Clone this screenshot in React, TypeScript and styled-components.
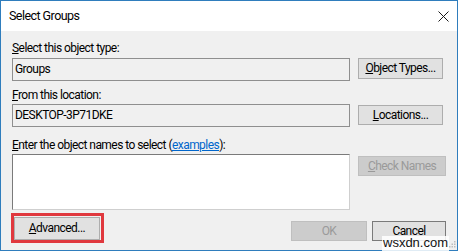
import React from "react";
import styled, { createGlobalStyle } from "styled-components";

const GlobalStyle = createGlobalStyle`
  html, body { margin: 0; padding: 0; background: #ffffff; }
  body { font-family: Roboto, "Liberation Sans", Arial, sans-serif; font-size: 12px; letter-spacing: -0.55px; color: #000; }
  * { box-sizing: border-box; }
`;

const Window = styled.div`
  position: relative;
  width: 458px;
  height: 251px;
  border: 1px solid #2f7dbd;
  background: #f0f0f0;
  display: flex;
  flex-direction: column;
`;

const TitleBar = styled.div`
  height: 30px;
  background: #ffffff;
  display: flex;
  align-items: center;
  justify-content: space-between;
  padding-left: 8px;
`;

const Title = styled.span`
  font-size: 12.5px;
  line-height: 15px;
  padding-bottom: 2px;
`;

const CloseBox = styled.div`
  width: 28px;
  height: 30px;
  display: flex;
  align-items: center;
  justify-content: center;
`;

const Body = styled.div`
  flex: 1;
  display: grid;
  grid-template-columns: 1fr 88px;
  column-gap: 8px;
  align-content: start;
  padding: 10px 11px 0 11px;
`;

const Label = styled.div<{ $mt: number }>`
  grid-column: 1 / -1;
  height: 15px;
  line-height: 15px;
  margin-top: ${(p) => p.$mt}px;
  white-space: nowrap;
`;

const Field = styled.div<{ $mt: number }>`
  height: 23px;
  margin-top: ${(p) => p.$mt}px;
  border: 1px solid #8f8f8f;
  background: #f0f0f0;
  display: flex;
  align-items: center;
  padding-left: 2px;
  line-height: 15px;
`;

const NamesBox = styled.div`
  height: 56px;
  margin-top: 1px;
  background: #ffffff;
  border-top: 1px solid #7a7a7a;
  border-left: 1px solid #7a7a7a;
  border-right: 1px solid #cfcfcf;
  border-bottom: 1px solid #cfcfcf;
`;

const Button = styled.div<{ $w: number; $h: number; $mt?: number; $disabled?: boolean; $dark?: boolean }>`
  width: ${(p) => p.$w}px;
  height: ${(p) => p.$h}px;
  margin-top: ${(p) => p.$mt ?? 0}px;
  align-self: ${(p) => (p.$mt === undefined ? "center" : "start")};
  border: 1px solid ${(p) => (p.$disabled ? "#bfbfbf" : p.$dark ? "#7a7a7a" : "#adadad")};
  background: ${(p) => (p.$disabled ? "#cccccc" : "#e1e1e1")};
  color: ${(p) => (p.$disabled ? "#9a9a9a" : "#000")};
  display: flex;
  align-items: center;
  justify-content: center;
  line-height: 15px;
  white-space: nowrap;
  flex-shrink: 0;
`;

const Link = styled.span`
  color: #0066cc;
  text-decoration: underline;
`;

const BottomRow = styled.div`
  grid-column: 1 / -1;
  display: flex;
  align-items: flex-start;
  margin-top: 3px;
  gap: 5px;
`;

const RedFrame = styled.div`
  margin-left: -1px;
  border: 3px solid #e0383e;
  padding: 1px 1px 0 0;
`;

const Spacer = styled.div`
  flex: 1;
`;

const Watermark = styled.div`
  position: absolute;
  left: 381px;
  top: 235px;
  font-family: "Liberation Sans", Arial, sans-serif;
  font-size: 13px;
  letter-spacing: 0;
  line-height: 13px;
  padding: 0 1px 2px 1px;
  background: rgba(255, 255, 255, 0.85);
  color: #111;
`;

const Grip = styled.svg`
  position: absolute;
  right: 1px;
  bottom: 2px;
`;

export default function App() {
  return (
    <>
      <GlobalStyle />
      <Window>
        <TitleBar>
          <Title>Select Groups</Title>
          <CloseBox>
            <svg width="11" height="11" viewBox="0 0 11 11">
              <path d="M0.5 0.5 L10.5 10.5 M10.5 0.5 L0.5 10.5" stroke="#1a1a1a" strokeWidth="1" fill="none" />
            </svg>
          </CloseBox>
        </TitleBar>
        <Body>
          <Label $mt={0}>
            <u>S</u>elect this object type:
          </Label>
          <Field $mt={2}>Groups</Field>
          <Button $w={85} $h={21}>
            <u>O</u>bject Types...
          </Button>

          <Label $mt={7}>
            <u>F</u>rom this location:
          </Label>
          <Field $mt={1}>DESKTOP-3P71DKE</Field>
          <Button $w={85} $h={20}>
            <u>L</u>ocations...
          </Button>

          <Label $mt={11}>
            <u>E</u>nter the object names to select (<Link>examples</Link>):
          </Label>
          <NamesBox />
          <Button $w={88} $h={20} $mt={3} $disabled>
            <u>C</u>heck Names
          </Button>

          <BottomRow>
            <RedFrame>
              <Button $w={86} $h={23} $mt={0}>
                <u>A</u>dvanced...
              </Button>
            </RedFrame>
            <Spacer />
            <Button $w={76} $h={20} $mt={8} $disabled>
              OK
            </Button>
            <Button $w={74} $h={20} $mt={8} $dark>
              Cancel
            </Button>
          </BottomRow>
        </Body>
        <Watermark>wsxdn.com</Watermark>
        <Grip width="7" height="7" viewBox="0 0 7 7">
          <rect x="5" y="0" width="1.5" height="1.5" fill="#bdbdbd" />
          <rect x="2.5" y="2.5" width="1.5" height="1.5" fill="#bdbdbd" />
          <rect x="5" y="2.5" width="1.5" height="1.5" fill="#bdbdbd" />
          <rect x="0" y="5" width="1.5" height="1.5" fill="#bdbdbd" />
          <rect x="2.5" y="5" width="1.5" height="1.5" fill="#bdbdbd" />
          <rect x="5" y="5" width="1.5" height="1.5" fill="#bdbdbd" />
        </Grip>
      </Window>
    </>
  );
}
